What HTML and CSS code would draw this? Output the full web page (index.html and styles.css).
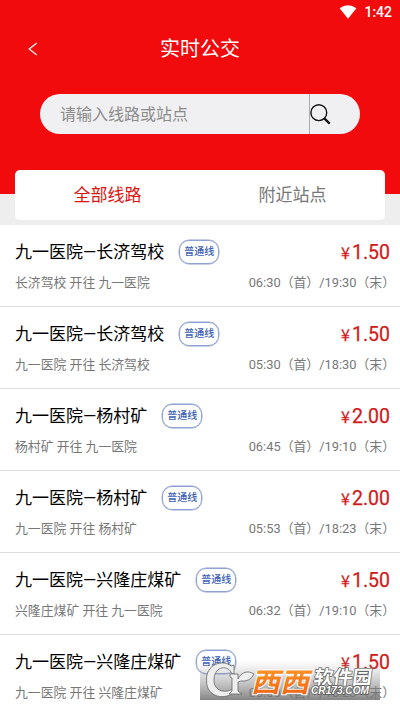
FILE: index.html
```html
<!DOCTYPE html>
<html lang="zh-CN">
<head>
<meta charset="utf-8">
<title>实时公交</title>
<link rel="stylesheet" href="styles.css">
</head>
<body>
<header class="header">
  <div class="status">
    <svg class="wifi" width="18" height="14" viewBox="0 0 18 14"><path d="M0.6 3.2Q9-2.6 17.4 3.2L9 13.8Z" fill="#fff"/></svg>
    <span class="clock">1:42</span>
  </div>
  <div class="nav">
    <svg class="back" width="10" height="14" viewBox="0 0 10 14"><path d="M8.8 1L1.2 7l7.6 6" fill="none" stroke="#fff" stroke-width="1.2"/></svg>
    <h1 class="page-title">实时公交</h1>
  </div>
  <div class="search">
    <span class="placeholder">请输入线路或站点</span>
    <span class="search-button"><svg width="21" height="21" viewBox="0 0 21 21"><circle cx="8.8" cy="8.7" r="7.9" fill="none" stroke="#111" stroke-width="1.4"/><path d="M14 14.2l5.7 5.4" stroke="#111" stroke-width="2.3"/></svg></span>
  </div>
</header>
<div class="tab-area">
  <nav class="tabs"><span class="tab active">全部线路</span><span class="tab">附近站点</span></nav>
</div>
<main class="list">
  <article class="route">
    <div class="line"><h2 class="name">九一医院—长济驾校</h2><span class="badge">普通线</span><span class="price"><span class="yen">¥</span>1.50</span></div>
    <div class="detail"><span>长济驾校 开往 九一医院</span><span class="hours">06:30（首）/19:30（末）</span></div>
  </article>
  <article class="route">
    <div class="line"><h2 class="name">九一医院—长济驾校</h2><span class="badge">普通线</span><span class="price"><span class="yen">¥</span>1.50</span></div>
    <div class="detail"><span>九一医院 开往 长济驾校</span><span class="hours">05:30（首）/18:30（末）</span></div>
  </article>
  <article class="route">
    <div class="line"><h2 class="name">九一医院—杨村矿</h2><span class="badge">普通线</span><span class="price"><span class="yen">¥</span>2.00</span></div>
    <div class="detail"><span>杨村矿 开往 九一医院</span><span class="hours">06:45（首）/19:10（末）</span></div>
  </article>
  <article class="route">
    <div class="line"><h2 class="name">九一医院—杨村矿</h2><span class="badge">普通线</span><span class="price"><span class="yen">¥</span>2.00</span></div>
    <div class="detail"><span>九一医院 开往 杨村矿</span><span class="hours">05:53（首）/18:23（末）</span></div>
  </article>
  <article class="route">
    <div class="line"><h2 class="name">九一医院—兴隆庄煤矿</h2><span class="badge">普通线</span><span class="price"><span class="yen">¥</span>1.50</span></div>
    <div class="detail"><span>兴隆庄煤矿 开往 九一医院</span><span class="hours">06:32（首）/19:10（末）</span></div>
  </article>
  <article class="route">
    <div class="line"><h2 class="name">九一医院—兴隆庄煤矿</h2><span class="badge">普通线</span><span class="price"><span class="yen">¥</span>1.50</span></div>
    <div class="detail"><span>九一医院 开往 兴隆庄煤矿</span><span class="hours">05:50（首）/18:23（末）</span></div>
  </article>
</main>
<svg class="watermark" width="180" height="40" viewBox="0 0 180 40">
  <defs>
    <linearGradient id="band" x2="0" y2="1"><stop offset="0" stop-color="#aaa" stop-opacity="0"/><stop offset="1" stop-color="#707070" stop-opacity=".85"/></linearGradient>
    <linearGradient id="orange" x2="0" y2="1"><stop offset="0" stop-color="#ffa32d"/><stop offset="1" stop-color="#ee5c0b"/></linearGradient>
  </defs>
  <rect width="180" height="40" fill="url(#band)"/>
  <g class="mark">
    <path d="M34 5V14L32 14C29 5 15 5 14 19C13 32 27 34 34 28L36 31C26 41 6 38 6.500 20C6 4 23-1 31 6Z"/>
    <path d="M30 14H38V19C41 12 48 10 54 14Q50 22 41 21L38 22V31L42 34H29L32 31V18L30 17Z"/>
  </g>
  <text class="cjk orange" transform="translate(51 32) skewX(-14)" textLength="58" lengthAdjust="spacingAndGlyphs">西西</text>
  <text class="cjk light" transform="translate(113 24) skewX(-8)" textLength="58" lengthAdjust="spacingAndGlyphs">软件园</text>
  <text class="domain" x="111" y="34" textLength="58" lengthAdjust="spacingAndGlyphs">CR173.COM</text>
</svg>
</body>
</html>
```
FILE: styles.css
```css
* { box-sizing: border-box; }
body {
  margin: 0;
  width: 400px;
  height: 710px;
  overflow: hidden;
  position: relative;
  background: #fff;
  font-family: Roboto, "Noto Sans CJK SC", sans-serif;
}
h1, h2 { margin: 0; font-weight: 400; }
.header { height: 194px; background: #f20b0d; color: #fff; }
.status {
  height: 24px;
  display: flex;
  justify-content: flex-end;
  align-items: center;
  gap: 7px;
  padding: 0 8px 0 0;
}
.wifi { margin-top: -1px; }
.clock { font-size: 14px; font-weight: 500; line-height: 24px; }
.nav {
  height: 50px;
  display: grid;
  grid-template-columns: 60px 1fr 60px;
  align-items: center;
}
.back { margin-left: 28px; }
.page-title { font-size: 20px; line-height: 50px; text-align: center; }
.search {
  height: 40px;
  margin: 20px 40px 0;
  border-radius: 20px;
  background: #f0f0f2;
  display: flex;
  overflow: hidden;
}
.placeholder { flex: 1; padding-left: 20px; font-size: 16px; line-height: 41px; color: #8b8b8b; }
.search-button { width: 51px; border-left: 1px solid #aaa; display: flex; align-items: center; }
.tab-area { height: 31px; background: #eee; padding: 0 15px; display: flex; }
.tabs {
  flex: 1;
  height: 50px;
  margin-top: -24px;
  position: relative;
  display: flex;
  border-radius: 5px;
  background: #fff;
}
.tab { flex: 1; text-align: center; font-size: 17px; line-height: 50px; color: #777; }
.active { color: #dc1412; }
.route { height: 82px; border-bottom: 1px solid #ddd; padding: 14px 10px 0 15px; }
.line { height: 25px; display: flex; align-items: center; }
.name { font-size: 17px; line-height: 25px; padding-top: 2px; color: #000; }
.badge {
  width: 40px;
  height: 24px;
  margin-left: 15px;
  border: 1.5px solid #8fa0d3;
  box-shadow: 0 0 0 0.4px #8fa0d3;
  border-radius: 10px;
  color: #3c60b5;
  font-size: 10px;
  font-weight: 500;
  line-height: 22px;
  text-align: center;
}
.price {
  margin-left: auto;
  padding-top: 2px;
  display: flex;
  align-items: baseline;
  font-size: 19.5px;
  line-height: 25px;
  color: #cf1b1b;
  -webkit-text-stroke: 0.25px #cf1b1b;
}
.yen { font-family: "Noto Sans CJK SC", sans-serif; font-size: 16px; margin-right: 2px; }
.detail {
  display: flex;
  justify-content: space-between;
  margin-top: 9px;
  font-size: 12.85px;
  line-height: 20px;
  color: #777;
}
.hours { margin-right: -5px; }
.watermark { position: absolute; left: 200px; top: 660px; overflow: visible; }
.mark { fill: #eee; stroke: #666; stroke-width: 0.8; }
.cjk { font-family: "Noto Sans CJK SC", sans-serif; font-weight: 700; paint-order: stroke; stroke-linejoin: round; }
.orange { font-size: 27px; fill: url(#orange); stroke: #fff; stroke-width: 2px; }
.light { font-size: 19px; fill: #fff; stroke: #666; stroke-width: 1.5px; }
.domain {
  font: italic 700 10px "Liberation Sans", sans-serif;
  fill: #fff;
  stroke: #555;
  stroke-width: 1.5px;
  paint-order: stroke;
}
```
